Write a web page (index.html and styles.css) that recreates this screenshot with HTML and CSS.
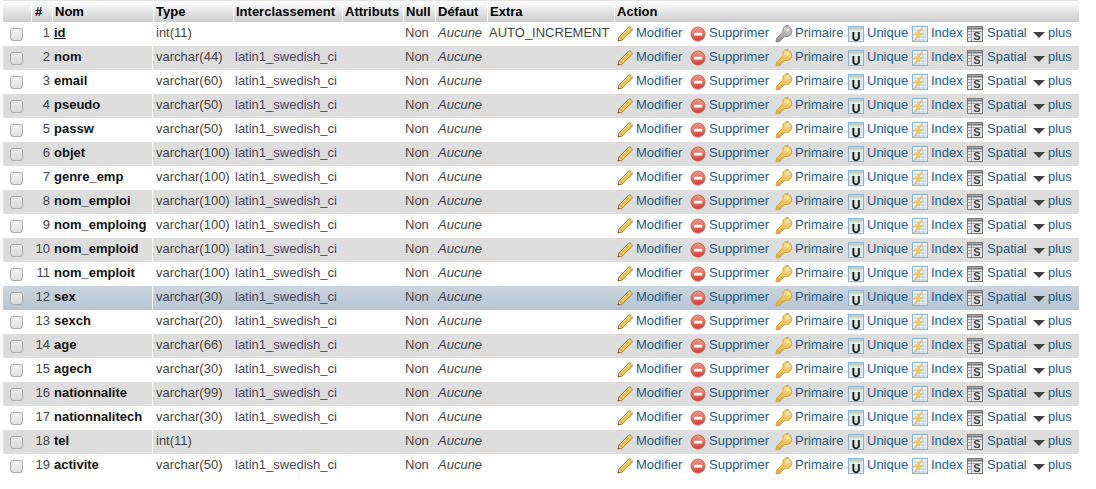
FILE: index.html
```html
<!DOCTYPE html>
<html lang="fr">
<head>
<meta charset="utf-8">
<title>Structure</title>
<link rel="stylesheet" href="styles.css">
</head>
<body>
<svg class="defs" width="0" height="0" aria-hidden="true">
  <defs>
    <linearGradient id="gk" x1="0" y1="0" x2="0" y2="1"><stop offset="0" stop-color="#fde690"/><stop offset="1" stop-color="#e6a92e"/></linearGradient>
    <linearGradient id="gg" x1="0" y1="0" x2="0" y2="1"><stop offset="0" stop-color="#d8d8d8"/><stop offset="1" stop-color="#929292"/></linearGradient>
    <linearGradient id="gr" x1="0" y1="0" x2="0" y2="1"><stop offset="0" stop-color="#f09a8c"/><stop offset="1" stop-color="#d83c2c"/></linearGradient>
    <symbol id="pencil" viewBox="0 0 16 16">
      <path d="M1 15l1.200-4.300L11.600 1.300c.7-.7 1.500-.6 2.200.1l1 1c.6.7.7 1.400 0 2.100L5.300 13.900z" fill="#f3c64b" stroke="#a5762a" stroke-width=".9"/>
      <path d="M1 15l1.200-4.300 3.100 3.200z" fill="#f4dfb4" stroke="#a5762a" stroke-width=".7"/>
      <path d="M1 15l.5-1.800 1.300 1.300z" fill="#4a3a20"/>
      <path d="M3.800 10.200l8.200-8.200" stroke="#fbe9a8" stroke-width="1"/>
    </symbol>
    <symbol id="minus" viewBox="0 0 16 16">
      <circle cx="8" cy="8" r="7" fill="url(#gr)" stroke="#c9584a" stroke-width=".9"/>
      <rect x="3.800" y="6.700" width="8.400" height="2.700" rx=".4" fill="#fff"/>
    </symbol>
    <symbol id="key" viewBox="0 0 18 18">
      <path d="M11.500 1.200c2.800 0 5.300 2.400 5.300 5.200 0 2.900-2.500 5.200-5.300 5.200-.6 0-1.200-.1-1.700-.3L8 13l-1 .1-.2 1.500-1.500.2-.2 1.500-3.400.7-.6-.6.600-3.300 6.300-6.300c-.1-.4-.2-.9-.2-1.400 0-2.900 2.500-5.200 5.700-5.200z" stroke-width=".9"/>
      <circle cx="12.800" cy="4.900" r="1.300" fill="#fff8e0" stroke="none" opacity=".85"/>
    </symbol>
    <symbol id="unique" viewBox="0 0 16 16">
      <rect x=".5" y=".5" width="15" height="15" fill="#eaf2fb" stroke="#8db2da"/>
      <rect x="1" y="1" width="14" height="3" fill="#c4d8b4"/>
      <path d="M1 7h14M1 10h14M1 13h14M5 4v11M11 4v11" stroke="#c6d8ec" stroke-width=".8"/>
      <text x="8" y="14.500" text-anchor="middle" class="ugl">U</text>
    </symbol>
    <symbol id="index" viewBox="0 0 16 16">
      <rect x=".5" y=".5" width="15" height="15" fill="#eef4fb" stroke="#8db2da"/>
      <path d="M1 4h14M7 8h8M7 11h8M1 14h14M7 4v11M11 4v11" stroke="#a8c4e2" stroke-width=".8"/>
      <path d="M11 1L1 9h4l-3 6 9-7.500H7z" fill="#f5cf62" stroke="#e0ae3c" stroke-width=".5"/>
    </symbol>
    <symbol id="spatial" viewBox="0 0 16 16">
      <rect x=".5" y=".5" width="15" height="15" fill="#e8e8e8" stroke="#777"/>
      <path d="M1 2.500h14" stroke="#777" stroke-width="2"/>
      <path d="M1 5.500h14M4.500 4v11M1 8.500h4M1 11.500h4" stroke="#999" stroke-width=".9"/>
      <text x="10" y="14" text-anchor="middle" class="sgl">S</text>
    </symbol>
  </defs>
</svg>
<table class="structure">
  <colgroup>
    <col class="c-check"><col class="c-num"><col class="c-name"><col class="c-type"><col class="c-coll"><col class="c-attr"><col class="c-null"><col class="c-def"><col class="c-extra"><col class="c-act">
  </colgroup>
  <thead>
    <tr><th></th><th class="ctr">#</th><th>Nom</th><th>Type</th><th>Interclassement</th><th>Attributs</th><th>Null</th><th>Défaut</th><th>Extra</th><th>Action</th></tr>
  </thead>
  <tbody>
    <tr class="odd"><td class="chk"><span class="box"></span></td><td class="num">1</td><td class="name"><u>id</u></td><td class="txt">int(11)</td><td class="coll"></td><td></td><td class="nul">Non</td><td class="def">Aucune</td><td class="extra">AUTO_INCREMENT</td><td class="actions"><div class="actrow"><a class="act a-mod"><svg class="ic"><use href="#pencil"/></svg>Modifier</a><a class="act a-sup"><svg class="ic"><use href="#minus"/></svg>Supprimer</a><a class="act a-pri"><svg class="ic key-off"><use href="#key"/></svg>Primaire</a><a class="act a-uni"><svg class="ic"><use href="#unique"/></svg>Unique</a><a class="act a-idx"><svg class="ic"><use href="#index"/></svg>Index</a><a class="act a-spa"><svg class="ic"><use href="#spatial"/></svg>Spatial</a><a class="act"><span class="tri"></span>plus</a></div></td></tr>
    <tr class="even"><td class="chk"><span class="box"></span></td><td class="num">2</td><td class="name">nom</td><td class="txt">varchar(44)</td><td class="coll">latin1_swedish_ci</td><td></td><td class="nul">Non</td><td class="def">Aucune</td><td class="extra"></td><td class="actions"><div class="actrow"><a class="act a-mod"><svg class="ic"><use href="#pencil"/></svg>Modifier</a><a class="act a-sup"><svg class="ic"><use href="#minus"/></svg>Supprimer</a><a class="act a-pri"><svg class="ic key-on"><use href="#key"/></svg>Primaire</a><a class="act a-uni"><svg class="ic"><use href="#unique"/></svg>Unique</a><a class="act a-idx"><svg class="ic"><use href="#index"/></svg>Index</a><a class="act a-spa"><svg class="ic"><use href="#spatial"/></svg>Spatial</a><a class="act"><span class="tri"></span>plus</a></div></td></tr>
    <tr class="odd"><td class="chk"><span class="box"></span></td><td class="num">3</td><td class="name">email</td><td class="txt">varchar(60)</td><td class="coll">latin1_swedish_ci</td><td></td><td class="nul">Non</td><td class="def">Aucune</td><td class="extra"></td><td class="actions"><div class="actrow"><a class="act a-mod"><svg class="ic"><use href="#pencil"/></svg>Modifier</a><a class="act a-sup"><svg class="ic"><use href="#minus"/></svg>Supprimer</a><a class="act a-pri"><svg class="ic key-on"><use href="#key"/></svg>Primaire</a><a class="act a-uni"><svg class="ic"><use href="#unique"/></svg>Unique</a><a class="act a-idx"><svg class="ic"><use href="#index"/></svg>Index</a><a class="act a-spa"><svg class="ic"><use href="#spatial"/></svg>Spatial</a><a class="act"><span class="tri"></span>plus</a></div></td></tr>
    <tr class="even"><td class="chk"><span class="box"></span></td><td class="num">4</td><td class="name">pseudo</td><td class="txt">varchar(50)</td><td class="coll">latin1_swedish_ci</td><td></td><td class="nul">Non</td><td class="def">Aucune</td><td class="extra"></td><td class="actions"><div class="actrow"><a class="act a-mod"><svg class="ic"><use href="#pencil"/></svg>Modifier</a><a class="act a-sup"><svg class="ic"><use href="#minus"/></svg>Supprimer</a><a class="act a-pri"><svg class="ic key-on"><use href="#key"/></svg>Primaire</a><a class="act a-uni"><svg class="ic"><use href="#unique"/></svg>Unique</a><a class="act a-idx"><svg class="ic"><use href="#index"/></svg>Index</a><a class="act a-spa"><svg class="ic"><use href="#spatial"/></svg>Spatial</a><a class="act"><span class="tri"></span>plus</a></div></td></tr>
    <tr class="odd"><td class="chk"><span class="box"></span></td><td class="num">5</td><td class="name">passw</td><td class="txt">varchar(50)</td><td class="coll">latin1_swedish_ci</td><td></td><td class="nul">Non</td><td class="def">Aucune</td><td class="extra"></td><td class="actions"><div class="actrow"><a class="act a-mod"><svg class="ic"><use href="#pencil"/></svg>Modifier</a><a class="act a-sup"><svg class="ic"><use href="#minus"/></svg>Supprimer</a><a class="act a-pri"><svg class="ic key-on"><use href="#key"/></svg>Primaire</a><a class="act a-uni"><svg class="ic"><use href="#unique"/></svg>Unique</a><a class="act a-idx"><svg class="ic"><use href="#index"/></svg>Index</a><a class="act a-spa"><svg class="ic"><use href="#spatial"/></svg>Spatial</a><a class="act"><span class="tri"></span>plus</a></div></td></tr>
    <tr class="even"><td class="chk"><span class="box"></span></td><td class="num">6</td><td class="name">objet</td><td class="txt">varchar(100)</td><td class="coll">latin1_swedish_ci</td><td></td><td class="nul">Non</td><td class="def">Aucune</td><td class="extra"></td><td class="actions"><div class="actrow"><a class="act a-mod"><svg class="ic"><use href="#pencil"/></svg>Modifier</a><a class="act a-sup"><svg class="ic"><use href="#minus"/></svg>Supprimer</a><a class="act a-pri"><svg class="ic key-on"><use href="#key"/></svg>Primaire</a><a class="act a-uni"><svg class="ic"><use href="#unique"/></svg>Unique</a><a class="act a-idx"><svg class="ic"><use href="#index"/></svg>Index</a><a class="act a-spa"><svg class="ic"><use href="#spatial"/></svg>Spatial</a><a class="act"><span class="tri"></span>plus</a></div></td></tr>
    <tr class="odd"><td class="chk"><span class="box"></span></td><td class="num">7</td><td class="name">genre_emp</td><td class="txt">varchar(100)</td><td class="coll">latin1_swedish_ci</td><td></td><td class="nul">Non</td><td class="def">Aucune</td><td class="extra"></td><td class="actions"><div class="actrow"><a class="act a-mod"><svg class="ic"><use href="#pencil"/></svg>Modifier</a><a class="act a-sup"><svg class="ic"><use href="#minus"/></svg>Supprimer</a><a class="act a-pri"><svg class="ic key-on"><use href="#key"/></svg>Primaire</a><a class="act a-uni"><svg class="ic"><use href="#unique"/></svg>Unique</a><a class="act a-idx"><svg class="ic"><use href="#index"/></svg>Index</a><a class="act a-spa"><svg class="ic"><use href="#spatial"/></svg>Spatial</a><a class="act"><span class="tri"></span>plus</a></div></td></tr>
    <tr class="even"><td class="chk"><span class="box"></span></td><td class="num">8</td><td class="name">nom_emploi</td><td class="txt">varchar(100)</td><td class="coll">latin1_swedish_ci</td><td></td><td class="nul">Non</td><td class="def">Aucune</td><td class="extra"></td><td class="actions"><div class="actrow"><a class="act a-mod"><svg class="ic"><use href="#pencil"/></svg>Modifier</a><a class="act a-sup"><svg class="ic"><use href="#minus"/></svg>Supprimer</a><a class="act a-pri"><svg class="ic key-on"><use href="#key"/></svg>Primaire</a><a class="act a-uni"><svg class="ic"><use href="#unique"/></svg>Unique</a><a class="act a-idx"><svg class="ic"><use href="#index"/></svg>Index</a><a class="act a-spa"><svg class="ic"><use href="#spatial"/></svg>Spatial</a><a class="act"><span class="tri"></span>plus</a></div></td></tr>
    <tr class="odd"><td class="chk"><span class="box"></span></td><td class="num">9</td><td class="name">nom_emploing</td><td class="txt">varchar(100)</td><td class="coll">latin1_swedish_ci</td><td></td><td class="nul">Non</td><td class="def">Aucune</td><td class="extra"></td><td class="actions"><div class="actrow"><a class="act a-mod"><svg class="ic"><use href="#pencil"/></svg>Modifier</a><a class="act a-sup"><svg class="ic"><use href="#minus"/></svg>Supprimer</a><a class="act a-pri"><svg class="ic key-on"><use href="#key"/></svg>Primaire</a><a class="act a-uni"><svg class="ic"><use href="#unique"/></svg>Unique</a><a class="act a-idx"><svg class="ic"><use href="#index"/></svg>Index</a><a class="act a-spa"><svg class="ic"><use href="#spatial"/></svg>Spatial</a><a class="act"><span class="tri"></span>plus</a></div></td></tr>
    <tr class="even"><td class="chk"><span class="box"></span></td><td class="num">10</td><td class="name">nom_emploid</td><td class="txt">varchar(100)</td><td class="coll">latin1_swedish_ci</td><td></td><td class="nul">Non</td><td class="def">Aucune</td><td class="extra"></td><td class="actions"><div class="actrow"><a class="act a-mod"><svg class="ic"><use href="#pencil"/></svg>Modifier</a><a class="act a-sup"><svg class="ic"><use href="#minus"/></svg>Supprimer</a><a class="act a-pri"><svg class="ic key-on"><use href="#key"/></svg>Primaire</a><a class="act a-uni"><svg class="ic"><use href="#unique"/></svg>Unique</a><a class="act a-idx"><svg class="ic"><use href="#index"/></svg>Index</a><a class="act a-spa"><svg class="ic"><use href="#spatial"/></svg>Spatial</a><a class="act"><span class="tri"></span>plus</a></div></td></tr>
    <tr class="odd"><td class="chk"><span class="box"></span></td><td class="num">11</td><td class="name">nom_emploit</td><td class="txt">varchar(100)</td><td class="coll">latin1_swedish_ci</td><td></td><td class="nul">Non</td><td class="def">Aucune</td><td class="extra"></td><td class="actions"><div class="actrow"><a class="act a-mod"><svg class="ic"><use href="#pencil"/></svg>Modifier</a><a class="act a-sup"><svg class="ic"><use href="#minus"/></svg>Supprimer</a><a class="act a-pri"><svg class="ic key-on"><use href="#key"/></svg>Primaire</a><a class="act a-uni"><svg class="ic"><use href="#unique"/></svg>Unique</a><a class="act a-idx"><svg class="ic"><use href="#index"/></svg>Index</a><a class="act a-spa"><svg class="ic"><use href="#spatial"/></svg>Spatial</a><a class="act"><span class="tri"></span>plus</a></div></td></tr>
    <tr class="even hover"><td class="chk"><span class="box"></span></td><td class="num">12</td><td class="name">sex</td><td class="txt">varchar(30)</td><td class="coll">latin1_swedish_ci</td><td></td><td class="nul">Non</td><td class="def">Aucune</td><td class="extra"></td><td class="actions"><div class="actrow"><a class="act a-mod"><svg class="ic"><use href="#pencil"/></svg>Modifier</a><a class="act a-sup"><svg class="ic"><use href="#minus"/></svg>Supprimer</a><a class="act a-pri"><svg class="ic key-on"><use href="#key"/></svg>Primaire</a><a class="act a-uni"><svg class="ic"><use href="#unique"/></svg>Unique</a><a class="act a-idx"><svg class="ic"><use href="#index"/></svg>Index</a><a class="act a-spa"><svg class="ic"><use href="#spatial"/></svg>Spatial</a><a class="act"><span class="tri"></span>plus</a></div></td></tr>
    <tr class="odd"><td class="chk"><span class="box"></span></td><td class="num">13</td><td class="name">sexch</td><td class="txt">varchar(20)</td><td class="coll">latin1_swedish_ci</td><td></td><td class="nul">Non</td><td class="def">Aucune</td><td class="extra"></td><td class="actions"><div class="actrow"><a class="act a-mod"><svg class="ic"><use href="#pencil"/></svg>Modifier</a><a class="act a-sup"><svg class="ic"><use href="#minus"/></svg>Supprimer</a><a class="act a-pri"><svg class="ic key-on"><use href="#key"/></svg>Primaire</a><a class="act a-uni"><svg class="ic"><use href="#unique"/></svg>Unique</a><a class="act a-idx"><svg class="ic"><use href="#index"/></svg>Index</a><a class="act a-spa"><svg class="ic"><use href="#spatial"/></svg>Spatial</a><a class="act"><span class="tri"></span>plus</a></div></td></tr>
    <tr class="even"><td class="chk"><span class="box"></span></td><td class="num">14</td><td class="name">age</td><td class="txt">varchar(66)</td><td class="coll">latin1_swedish_ci</td><td></td><td class="nul">Non</td><td class="def">Aucune</td><td class="extra"></td><td class="actions"><div class="actrow"><a class="act a-mod"><svg class="ic"><use href="#pencil"/></svg>Modifier</a><a class="act a-sup"><svg class="ic"><use href="#minus"/></svg>Supprimer</a><a class="act a-pri"><svg class="ic key-on"><use href="#key"/></svg>Primaire</a><a class="act a-uni"><svg class="ic"><use href="#unique"/></svg>Unique</a><a class="act a-idx"><svg class="ic"><use href="#index"/></svg>Index</a><a class="act a-spa"><svg class="ic"><use href="#spatial"/></svg>Spatial</a><a class="act"><span class="tri"></span>plus</a></div></td></tr>
    <tr class="odd"><td class="chk"><span class="box"></span></td><td class="num">15</td><td class="name">agech</td><td class="txt">varchar(30)</td><td class="coll">latin1_swedish_ci</td><td></td><td class="nul">Non</td><td class="def">Aucune</td><td class="extra"></td><td class="actions"><div class="actrow"><a class="act a-mod"><svg class="ic"><use href="#pencil"/></svg>Modifier</a><a class="act a-sup"><svg class="ic"><use href="#minus"/></svg>Supprimer</a><a class="act a-pri"><svg class="ic key-on"><use href="#key"/></svg>Primaire</a><a class="act a-uni"><svg class="ic"><use href="#unique"/></svg>Unique</a><a class="act a-idx"><svg class="ic"><use href="#index"/></svg>Index</a><a class="act a-spa"><svg class="ic"><use href="#spatial"/></svg>Spatial</a><a class="act"><span class="tri"></span>plus</a></div></td></tr>
    <tr class="even"><td class="chk"><span class="box"></span></td><td class="num">16</td><td class="name">nationnalite</td><td class="txt">varchar(99)</td><td class="coll">latin1_swedish_ci</td><td></td><td class="nul">Non</td><td class="def">Aucune</td><td class="extra"></td><td class="actions"><div class="actrow"><a class="act a-mod"><svg class="ic"><use href="#pencil"/></svg>Modifier</a><a class="act a-sup"><svg class="ic"><use href="#minus"/></svg>Supprimer</a><a class="act a-pri"><svg class="ic key-on"><use href="#key"/></svg>Primaire</a><a class="act a-uni"><svg class="ic"><use href="#unique"/></svg>Unique</a><a class="act a-idx"><svg class="ic"><use href="#index"/></svg>Index</a><a class="act a-spa"><svg class="ic"><use href="#spatial"/></svg>Spatial</a><a class="act"><span class="tri"></span>plus</a></div></td></tr>
    <tr class="odd"><td class="chk"><span class="box"></span></td><td class="num">17</td><td class="name">nationnalitech</td><td class="txt">varchar(30)</td><td class="coll">latin1_swedish_ci</td><td></td><td class="nul">Non</td><td class="def">Aucune</td><td class="extra"></td><td class="actions"><div class="actrow"><a class="act a-mod"><svg class="ic"><use href="#pencil"/></svg>Modifier</a><a class="act a-sup"><svg class="ic"><use href="#minus"/></svg>Supprimer</a><a class="act a-pri"><svg class="ic key-on"><use href="#key"/></svg>Primaire</a><a class="act a-uni"><svg class="ic"><use href="#unique"/></svg>Unique</a><a class="act a-idx"><svg class="ic"><use href="#index"/></svg>Index</a><a class="act a-spa"><svg class="ic"><use href="#spatial"/></svg>Spatial</a><a class="act"><span class="tri"></span>plus</a></div></td></tr>
    <tr class="even"><td class="chk"><span class="box"></span></td><td class="num">18</td><td class="name">tel</td><td class="txt">int(11)</td><td class="coll"></td><td></td><td class="nul">Non</td><td class="def">Aucune</td><td class="extra"></td><td class="actions"><div class="actrow"><a class="act a-mod"><svg class="ic"><use href="#pencil"/></svg>Modifier</a><a class="act a-sup"><svg class="ic"><use href="#minus"/></svg>Supprimer</a><a class="act a-pri"><svg class="ic key-on"><use href="#key"/></svg>Primaire</a><a class="act a-uni"><svg class="ic"><use href="#unique"/></svg>Unique</a><a class="act a-idx"><svg class="ic"><use href="#index"/></svg>Index</a><a class="act a-spa"><svg class="ic"><use href="#spatial"/></svg>Spatial</a><a class="act"><span class="tri"></span>plus</a></div></td></tr>
    <tr class="odd"><td class="chk"><span class="box"></span></td><td class="num">19</td><td class="name">activite</td><td class="txt">varchar(50)</td><td class="coll">latin1_swedish_ci</td><td></td><td class="nul">Non</td><td class="def">Aucune</td><td class="extra"></td><td class="actions"><div class="actrow"><a class="act a-mod"><svg class="ic"><use href="#pencil"/></svg>Modifier</a><a class="act a-sup"><svg class="ic"><use href="#minus"/></svg>Supprimer</a><a class="act a-pri"><svg class="ic key-on"><use href="#key"/></svg>Primaire</a><a class="act a-uni"><svg class="ic"><use href="#unique"/></svg>Unique</a><a class="act a-idx"><svg class="ic"><use href="#index"/></svg>Index</a><a class="act a-spa"><svg class="ic"><use href="#spatial"/></svg>Spatial</a><a class="act"><span class="tri"></span>plus</a></div></td></tr>
  </tbody>
</table>
</body>
</html>
```
FILE: styles.css
```css
html, body { margin: 0; padding: 0; background: #fff; }
body { font-family: "Liberation Sans", Arial, sans-serif; font-size: 13px; color: #444; height: 489px; overflow: hidden; }
.defs { display: block; height: 0; }
.ugl { font: bold 12px "Liberation Sans", sans-serif; fill: #111; }
.sgl { font: bold 11px "Liberation Sans", sans-serif; fill: #444; }

.structure { border-collapse: separate; border-spacing: 0; table-layout: fixed; width: 1076px; margin: 0 0 0 3px; }
.c-check { width: 28px; }
.c-num { width: 21px; }
.c-name { width: 101px; }
.c-type { width: 80px; }
.c-coll { width: 109px; }
.c-attr { width: 61px; }
.c-null { width: 32px; }
.c-def { width: 52px; }
.c-extra { width: 127px; }
.c-act { width: 465px; }

th { height: 22px; padding: 0 0 0 2px; text-align: left; font-size: 13px; font-weight: bold; color: #000;
     background: linear-gradient(#ffffff, #cccccc); border-top: 1px solid #e4e4e4; border-left: 1px solid #fff;
     box-sizing: border-box; white-space: nowrap; overflow: hidden; }
th:first-child { border-left: 0; }
th.ctr { padding-left: 3px; }

tbody tr { height: 24px; }
td { padding: 0 0 4px; height: 24px; box-sizing: border-box; white-space: nowrap; overflow: hidden; font-size: 13px; color: #444; }
tr.odd td { background: #fff; }
tr.even td { background: #ddd; }
tr.hover td { background: linear-gradient(#ccd5df, #b5c5d5); }

td.chk { padding: 0 0 0 7px; }
.box { display: block; box-sizing: border-box; width: 13px; height: 13px; border: 1px solid #aaa; border-radius: 3px; background: linear-gradient(#f6f6f6, #dedede); }
tr.even .box { background: linear-gradient(#eeeeee, #d8d8d8); }

td.num { text-align: right; padding-right: 2px; }
td.name { padding-left: 2px; font-weight: bold; color: #111; border-right: 1px solid #fff; }
td.txt { padding-left: 3px; }
td.coll { padding-left: 2px; color: #4a4458; }
td.nul { padding-left: 2px; }
td.def { padding-left: 3px; font-style: italic; }
td.extra { padding-left: 2px; }

td.actions { padding: 0 0 0 3px; }
.actrow { display: flex; align-items: center; box-sizing: border-box; height: 24px; padding-bottom: 4px; }
.act { display: flex; align-items: center; color: #235a81; font-size: 13px; white-space: nowrap; }
.ic { width: 16px; height: 16px; margin: 4px 3px 0 0; flex: none; }
.a-mod { width: 73px; }
.a-sup { width: 85px; }
.a-pri { width: 73px; }
.a-uni { width: 64px; }
.a-idx { width: 55px; }
.a-spa { width: 66px; }
.a-pri .ic { width: 18px; height: 18px; margin-right: 2px; }
.a-spa .ic { margin-right: 4px; }
.key-on { fill: url(#gk); stroke: #cf9c38; }
.key-off { fill: url(#gg); stroke: #808080; }
.tri { width: 0; height: 0; border-left: 6px solid transparent; border-right: 6px solid transparent; border-top: 6px solid #444; margin: 5px 3px 0 0; }
```
